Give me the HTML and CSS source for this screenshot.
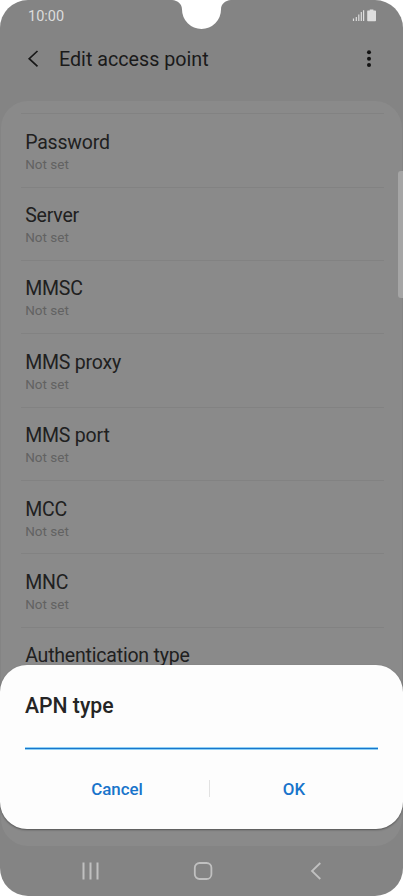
FILE: index.html
```html
<!DOCTYPE html>
<html lang="en">
<head>
<meta charset="utf-8">
<title>Edit access point</title>
<link rel="stylesheet" href="styles.css">
</head>
<body>
<div class="phone">
  <svg class="notch" width="64" height="30" viewBox="0 0 64 30"><path d="M2 0C8 .5 12 4 12 9.500A19.500 19.500 0 0 0 51 9.500C51 4 55 .5 61 0Z" fill="#fff"/></svg>
  <div class="status">
    <span class="time">10:00</span>
    <svg width="25" height="14" viewBox="0 0 25 14" fill="#dedede"><path d="M.900 10.500h1.200V13H.900zM3.700 9h1.200v4H3.700zM6.200 6.500h1.200V13H6.200zM8.700 4h1.200v9H8.700zM11 2.300h1.200V13H11z"/><path d="M15.800 2.500h2V1.500h3.600v1h1.800q.8 0 .8.800v9.100q0 .8-.8.800h-7.200q-.8 0-.8-.8V3.300q0-.8.600-.8z"/></svg>
  </div>
  <header class="bar">
    <svg class="back" width="12" height="18" viewBox="0 0 12 18"><path d="M10.500 1 2.200 8.700l8.300 7.700" fill="none" stroke="#181818" stroke-width="1.700"/></svg>
    <h1>Edit access point</h1>
    <svg width="6" height="18" viewBox="0 0 6 18" fill="#141414"><circle cx="3" cy="2.300" r="2"/><circle cx="3" cy="8.700" r="2"/><circle cx="3" cy="15.100" r="2"/></svg>
  </header>
  <main class="card">
    <div class="row"><div class="name">Password</div><div class="value">Not set</div></div>
    <div class="row"><div class="name">Server</div><div class="value">Not set</div></div>
    <div class="row"><div class="name">MMSC</div><div class="value">Not set</div></div>
    <div class="row"><div class="name">MMS proxy</div><div class="value">Not set</div></div>
    <div class="row"><div class="name">MMS port</div><div class="value">Not set</div></div>
    <div class="row"><div class="name">MCC</div><div class="value">Not set</div></div>
    <div class="row"><div class="name">MNC</div><div class="value">Not set</div></div>
    <div class="row"><div class="name">Authentication type</div></div>
  </main>
  <nav class="nav">
    <svg width="18" height="18" viewBox="0 0 18 18"><path d="M1.500.500v17M8.500.500v17M15.500.500v17" stroke="#c0c0c0" stroke-width="2"/></svg>
    <svg class="home" width="20" height="18" viewBox="0 0 20 18"><rect x="1.800" y="1" width="16.600" height="16" rx="4.800" fill="none" stroke="#c0c0c0" stroke-width="1.800"/></svg>
    <svg width="12" height="18" viewBox="0 0 12 18"><path d="M10.300 1 2 9l8.300 8" fill="none" stroke="#c0c0c0" stroke-width="1.800"/></svg>
  </nav>
  <div class="scroll"></div>
  <section class="dialog">
    <h2>APN type</h2>
    <div class="field"></div>
    <div class="actions"><button>Cancel</button><span class="split"></span><button>OK</button></div>
  </section>
</div>
</body>
</html>
```
FILE: styles.css
```css
* { box-sizing: border-box; }
body { margin: 0; background: #fff; font-family: Roboto, sans-serif; }
svg { display: block; flex: none; }
.phone { position: relative; width: 403px; height: 896px; overflow: hidden; background: #848484; border-radius: 28px; display: flex; flex-direction: column; }
.notch { position: absolute; top: 0; left: 170px; }
.status { height: 32px; padding: 0 26px 0 28px; display: flex; justify-content: space-between; align-items: center; }
.time { font-size: 14.500px; color: #dcdcdc; }
.status svg { margin-top: -2px; }
.bar { height: 69px; padding: 0 31px 15px 27px; display: flex; align-items: center; }
.bar h1 { flex: 1; margin: 2px 0 0 20px; font-size: 19.700px; line-height: 24px; font-weight: 400; color: #1a1a1a; }
.card { height: 744.500px; margin: 0 1px; padding: 12.400px 18px 0 20px; background: #8a8a8a; border-radius: 27px; overflow: hidden; }
.row { height: 73.350px; border-top: 1px solid #828282; padding: 16.400px 4.200px 0; }
.name { font-size: 19.500px; line-height: 24px; letter-spacing: -.2px; color: #202020; }
.value { font-size: 13.500px; line-height: 18px; color: #626262; }
.nav { flex: 1; padding: 1px 81px 0 82px; display: flex; align-items: center; justify-content: space-between; }
.home { margin-right: 4.500px; }
.scroll { position: absolute; right: 0; top: 171px; width: 5px; height: 127px; border-radius: 3px 0 0 3px; background: #a5a5a5; }
.dialog { position: absolute; left: 0; top: 665px; width: 403px; height: 164px; padding: 27px 25px 0; border-radius: 27px; background: #fdfdfd; box-shadow: 0 1px 2px #0006; }
.dialog h2 { margin: 0; font-size: 21.200px; line-height: 28px; font-weight: 500; color: #252525; }
.field { height: 30px; background: linear-gradient(#8fd0f4 1px, #1876cc 1px 2px, #8fd0f4 2px) bottom / 100% 3px no-repeat; }
.actions { display: grid; grid-template-columns: 184px 1px 168px; align-items: center; height: 77px; }
.actions button { border: 0; padding: 0; background: none; font: 500 16.900px/20px Roboto, sans-serif; color: #1874cb; }
.split { width: 1px; height: 17px; background: #e2e2e2; }
```
